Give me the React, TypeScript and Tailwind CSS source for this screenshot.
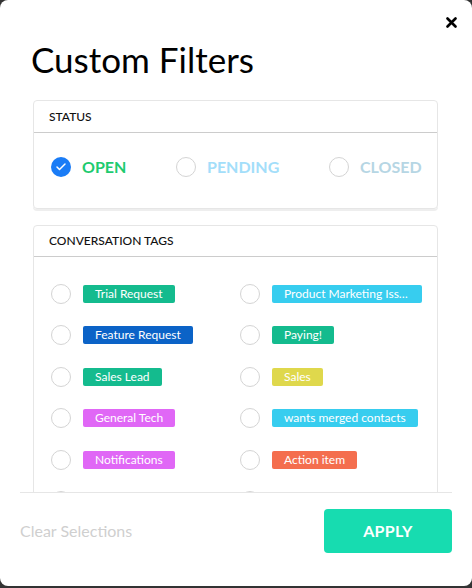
import { Check } from "lucide-react";

const statuses = [
  { label: "OPEN", color: "text-[#1ecb6f]", checked: true },
  { label: "PENDING", color: "text-[#a3defa]", checked: false },
  { label: "CLOSED", color: "text-[#b6d6e4]", checked: false },
];

const tags = [
  ["Trial Request", "bg-[#14bb8e]"],
  ["Product Marketing Issues", "bg-[#37cdef]"],
  ["Feature Request", "bg-[#0b63c7]"],
  ["Paying!", "bg-[#14bb8e]"],
  ["Sales Lead", "bg-[#14bb8e]"],
  ["Sales", "bg-[#dfd84c]"],
  ["General Tech", "bg-[#e067f6]"],
  ["wants merged contacts", "bg-[#37cdef]"],
  ["Notifications", "bg-[#e067f6]"],
  ["Action item", "bg-[#f46e4e]"],
  ["Upsell Opportunity", "bg-[#14bb8e]"],
  ["Billing", "bg-[#37cdef]"],
];

function Radio({ checked }: { checked?: boolean }) {
  if (checked) {
    return (
      <span className="flex h-[20px] w-[20px] shrink-0 items-center justify-center rounded-full bg-[#1a7cf6]">
        <Check size={12} strokeWidth={3} className="text-white" />
      </span>
    );
  }
  return <span className="h-[20px] w-[20px] shrink-0 rounded-full border border-[#d4d4d4] bg-white" />;
}

export default function App() {
  return (
    <div className="h-[588px] w-[472px] bg-[#333333] font-['Lato',sans-serif]">
      <div className="relative flex h-[586px] flex-col rounded-[8px] bg-white">
        {/* close */}
        <button className="absolute right-[14px] top-[15px] flex h-[14px] w-[14px] items-center justify-center">
          <svg width="11" height="11" viewBox="0 0 11 11">
            <path d="M1.5 1.5 L9.5 9.5 M9.5 1.5 L1.5 9.5" stroke="#000" strokeWidth="2.6" strokeLinecap="round" />
          </svg>
        </button>

        <h1 className="pl-[31px] pt-[41px] text-[35px] font-normal leading-[36px] text-black">
          Custom Filters
        </h1>

        {/* scroll area */}
        <div className="mx-[20px] mt-[23px] h-[393px] overflow-hidden border-b border-[#e6e6e6] pl-[13px] pr-[14px]">
          {/* Status */}
          <div className="rounded-[4px] border border-[#e6e6e6] shadow-[0_2px_0_#eeeeee]">
            <div className="flex h-[32px] items-center border-b border-[#cccccc] pl-[15px] text-[12px] font-medium text-[#111]">
              STATUS
            </div>
            <div className="flex h-[75px] items-start pl-[17px] pt-[22px]">
              {statuses.map((s, i) => (
                <div
                  key={s.label}
                  className={
                    "flex items-center gap-[11px] " +
                    (i === 0 ? "w-[125px]" : i === 1 ? "w-[153px]" : "")
                  }
                >
                  <Radio checked={s.checked} />
                  <span className={"text-[16px] font-bold " + s.color}>{s.label}</span>
                </div>
              ))}
            </div>
          </div>

          {/* Conversation tags */}
          <div className="mt-[16px] rounded-t-[4px] border border-[#e6e6e6]">
            <div className="flex h-[31px] items-center border-b border-[#cccccc] pl-[15px] text-[12px] font-medium text-[#111]">
              CONVERSATION TAGS
            </div>
            <div className="grid grid-cols-[189px_1fr] pl-[17px] pt-[16px]">
              {tags.map(([name, bg]) => (
                <div key={name} className="flex h-[41.5px] items-center gap-[12px]">
                  <Radio />
                  <span
                    className={
                      "block h-[18px] max-w-[150px] truncate rounded-[2px] px-[12px] text-[12px] leading-[18px] text-white " +
                      bg
                    }
                  >
                    {name}
                  </span>
                </div>
              ))}
            </div>
          </div>
        </div>

        {/* footer */}
        <div className="flex items-center justify-between px-[20px] pt-[16px]">
          <span className="text-[16px] text-[#cfcfcf]">Clear Selections</span>
          <button className="h-[44px] w-[128px] rounded-[4px] bg-[#17dcb0] text-[16px] font-bold tracking-[0.3px] text-white">
            APPLY
          </button>
        </div>
      </div>
    </div>
  );
}
